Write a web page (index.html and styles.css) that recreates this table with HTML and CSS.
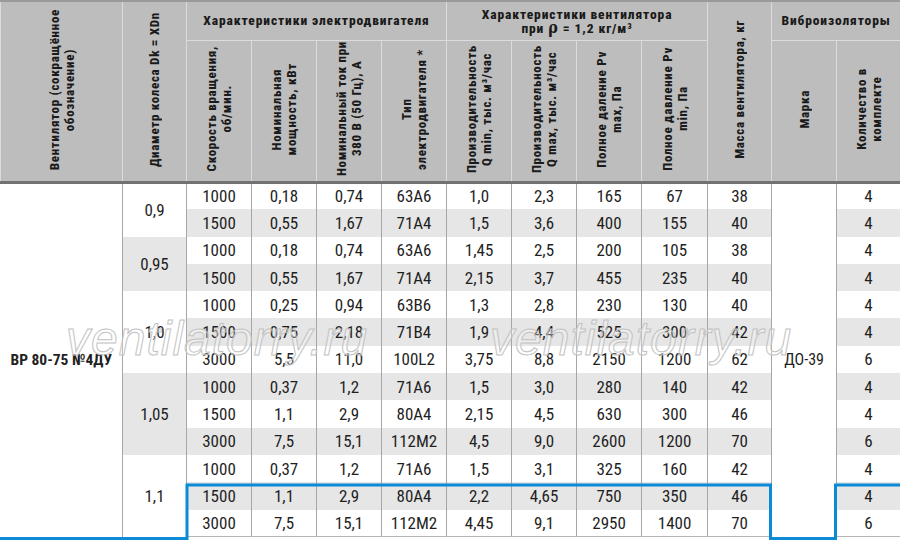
FILE: index.html
```html
<!DOCTYPE html>
<html lang="ru">
<head>
<meta charset="utf-8">
<title>ВР 80-75 №4ДУ</title>
<link rel="stylesheet" href="styles.css">
</head>
<body>
<div class="sheet">
<table class="spec">
<colgroup>
<col class="w-name"><col class="w-diam">
<col class="w-65"><col class="w-65"><col class="w-65"><col class="w-65">
<col class="w-65"><col class="w-65"><col class="w-65"><col class="w-66">
<col class="w-64"><col class="w-65"><col class="w-64">
</colgroup>
<thead>
<tr class="hrow1">
<th rowspan="2" class="hcell"><span class="rot">Вентилятор (сокращённое<br>обозначение)</span></th>
<th rowspan="2" class="hcell"><span class="rot">Диаметр колеса Dk = XDn</span></th>
<th colspan="4" class="hcell group">Характеристики электродвигателя</th>
<th colspan="4" class="hcell group two">Характеристики вентилятора<br>при <span class="rho">ρ</span> = 1,2 кг/м³</th>
<th rowspan="2" class="hcell"><span class="rot">Масса вентилятора, кг</span></th>
<th colspan="2" class="hcell group">Виброизоляторы</th>
</tr>
<tr class="hrow2">
<th class="hcell"><span class="rot">Скорость вращения,<br>об/мин.</span></th>
<th class="hcell"><span class="rot">Номинальная<br>мощность, кВт</span></th>
<th class="hcell"><span class="rot">Номинальный ток при<br>380 В (50 Гц), А</span></th>
<th class="hcell"><span class="rot">Тип<br>электродвигателя *</span></th>
<th class="hcell"><span class="rot">Производительность<br>Q min, тыс. м³/час</span></th>
<th class="hcell"><span class="rot">Производительность<br>Q max, тыс. м³/час</span></th>
<th class="hcell"><span class="rot">Полное даление Pv<br>max, Па</span></th>
<th class="hcell"><span class="rot">Полное давление Pv<br>min, Па</span></th>
<th class="hcell"><span class="rot">Марка</span></th>
<th class="hcell"><span class="rot">Количество в<br>комплекте</span></th>
</tr>
</thead>
<tbody>
<tr><td rowspan="13" class="name">ВР 80-75 №4ДУ</td><td rowspan="2" class="diam">0,9</td><td>1000</td><td>0,18</td><td>0,74</td><td>63А6</td><td>1,0</td><td>2,3</td><td>165</td><td>67</td><td>38</td><td rowspan="13" class="brand">ДО-39</td><td>4</td></tr>
<tr class="alt"><td>1500</td><td>0,55</td><td>1,67</td><td>71А4</td><td>1,5</td><td>3,6</td><td>400</td><td>155</td><td>40</td><td>4</td></tr>
<tr><td rowspan="2" class="diam dgray">0,95</td><td>1000</td><td>0,18</td><td>0,74</td><td>63А6</td><td>1,45</td><td>2,5</td><td>200</td><td>105</td><td>38</td><td>4</td></tr>
<tr class="alt"><td>1500</td><td>0,55</td><td>1,67</td><td>71А4</td><td>2,15</td><td>3,7</td><td>455</td><td>235</td><td>40</td><td>4</td></tr>
<tr><td rowspan="3" class="diam">1,0</td><td>1000</td><td>0,25</td><td>0,94</td><td>63В6</td><td>1,3</td><td>2,8</td><td>230</td><td>130</td><td>40</td><td>4</td></tr>
<tr class="alt"><td>1500</td><td>0,75</td><td>2,18</td><td>71В4</td><td>1,9</td><td>4,4</td><td>525</td><td>300</td><td>42</td><td>4</td></tr>
<tr><td>3000</td><td>5,5</td><td>11,0</td><td>100L2</td><td>3,75</td><td>8,8</td><td>2150</td><td>1200</td><td>62</td><td>6</td></tr>
<tr class="alt"><td rowspan="3" class="diam dgray">1,05</td><td>1000</td><td>0,37</td><td>1,2</td><td>71А6</td><td>1,5</td><td>3,0</td><td>280</td><td>140</td><td>42</td><td>4</td></tr>
<tr><td>1500</td><td>1,1</td><td>2,9</td><td>80А4</td><td>2,15</td><td>4,5</td><td>630</td><td>300</td><td>46</td><td>4</td></tr>
<tr class="alt"><td>3000</td><td>7,5</td><td>15,1</td><td>112М2</td><td>4,5</td><td>9,0</td><td>2600</td><td>1200</td><td>70</td><td>6</td></tr>
<tr><td rowspan="3" class="diam">1,1</td><td>1000</td><td>0,37</td><td>1,2</td><td>71А6</td><td>1,5</td><td>3,1</td><td>325</td><td>160</td><td>42</td><td>4</td></tr>
<tr class="alt"><td>1500</td><td>1,1</td><td>2,9</td><td>80А4</td><td>2,2</td><td>4,65</td><td>750</td><td>350</td><td>46</td><td>4</td></tr>
<tr class="last"><td>3000</td><td>7,5</td><td>15,1</td><td>112М2</td><td>4,45</td><td>9,1</td><td>2950</td><td>1400</td><td>70</td><td>6</td></tr>
</tbody>
</table>
<div class="wm wm-a">ventilatorry.ru</div>
<div class="wm wm-b">ventilatorry.ru</div>
<svg class="outline" width="900" height="540" viewBox="0 0 900 540" aria-hidden="true">
<polyline points="0,538.5 187,538.5 187,485 770.5,485 770.5,538.5 835.5,538.5 835.5,485 900,485" fill="none" stroke="#0b8ad6" stroke-width="3" stroke-linejoin="miter"/>
</svg>
</div>
</body>
</html>
```
FILE: styles.css
```css
html, body {
  margin: 0;
  padding: 0;
  background: #ffffff;
}

.sheet {
  position: relative;
  width: 900px;
  height: 540px;
  overflow: hidden;
  font-family: "Roboto Condensed", "Roboto", "Liberation Sans", sans-serif;
  font-stretch: 80%;
  color: #1f1f1f;
}

.spec {
  width: 900px;
  table-layout: fixed;
  border-collapse: collapse;
  border-spacing: 0;
}

.w-name { width: 122px; }
.w-diam { width: 64px; }
.w-64 { width: 64px; }
.w-65 { width: 65px; }
.w-66 { width: 66px; }

.hcell {
  background: #bdbdbd;
  border: 1px solid #dcdcdc;
  padding: 0;
  font-weight: 800;
  font-size: 13px;
  letter-spacing: 0.7px;
  line-height: 15px;
  text-align: center;
  vertical-align: middle;
  color: #1a1a1a;
}

.hrow1 .hcell {
  border-top: 2px solid #9a9a9a;
}

.hrow1 { height: 39px; }
.hrow2 { height: 142px; }

thead tr:last-child .hcell,
.hrow1 .hcell[rowspan] {
  border-bottom: 3px solid #727272;
}

.group {
  font-size: 13.5px;
  letter-spacing: 0.9px;
}

.group.two {
  line-height: 14px;
}

.rho {
  font-size: 16px;
  font-family: "DejaVu Serif", serif;
  font-weight: 700;
}

.rot {
  display: inline-block;
  writing-mode: vertical-rl;
  transform: rotate(180deg);
  white-space: nowrap;
  text-align: center;
}

tbody tr {
  height: 27.3px;
}

tbody td {
  padding: 0;
  border-left: 1px solid #a6a6a6;
  border-right: 1px solid #a6a6a6;
  text-align: center;
  vertical-align: middle;
  font-size: 17px;
  line-height: 20px;
  background: #ffffff;
}

tbody tr.alt td {
  background: #e6e6e6;
}

tbody tr.last td {
  border-bottom: 1px solid #b5b5b5;
}

tbody td.name,
tbody td.brand,
tbody td.diam,
tbody tr.alt td.diam {
  background: #ffffff;
}

tbody td.diam.dgray,
tbody tr.alt td.diam.dgray {
  background: #e6e6e6;
}

tbody td.name {
  font-weight: 700;
  font-size: 15.5px;
  text-align: center;
  border-left: none;
}

tbody td.brand {
  font-size: 16px;
}

.wm {
  position: absolute;
  top: 315px;
  font-family: "Liberation Sans", sans-serif;
  font-style: italic;
  font-size: 48px;
  line-height: 48px;
  letter-spacing: 1px;
  color: rgba(255, 255, 255, 0.3);
  -webkit-text-stroke: 1px #c2c2c2;
  white-space: nowrap;
  pointer-events: none;
}

.wm-a { left: 66px; }
.wm-b { left: 490px; }

.outline {
  position: absolute;
  left: 0;
  top: 0;
  pointer-events: none;
}
```
